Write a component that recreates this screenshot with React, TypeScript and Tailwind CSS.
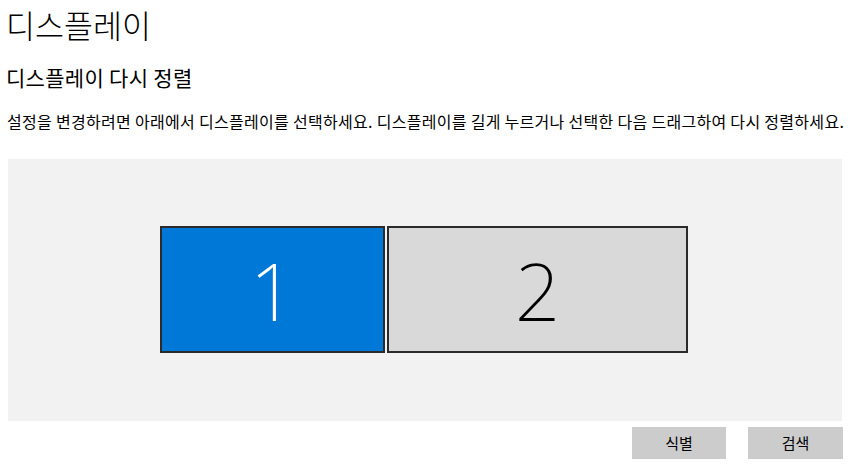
export default function App() {
    return (
        <div
            className="w-[864px] h-[471px] bg-white text-black overflow-hidden"
            style={{ fontFamily: '"Noto Sans CJK KR", "Noto Sans", sans-serif' }}
        >
            <div className="pl-[6px] pt-[4px]">
                {/* 페이지 제목 */}
                <h1 className="text-[31.5px] leading-[41px] font-light">디스플레이</h1>
                <h2 className="mt-[19px] text-[21px] leading-[27px] font-normal tracking-[0.3px]">디스플레이 다시 정렬</h2>
                <p className="mt-[19px] ml-[1px] text-[16px] leading-[23px] tracking-[0.3px] whitespace-nowrap">
                    설정을 변경하려면 아래에서 디스플레이를 선택하세요. 디스플레이를 길게 누르거나 선택한 다음 드래그하여 다시 정렬하세요.
                </p>
            </div>

            {/* 디스플레이 배치 영역 */}
            <div className="ml-[8px] mt-[26px] w-[834px] h-[262px] bg-[#f2f2f2] flex items-start pl-[152px] pt-[67px] gap-[2px]">
                <div className="w-[225px] h-[127px] bg-[#0078d7] border-2 border-[#2b2b2b] flex items-center justify-center">
                    <span
                        className="text-[80px] font-extralight text-white leading-none"
                        style={{ fontFamily: '"Noto Sans", sans-serif' }}
                    >
                        1
                    </span>
                </div>
                <div className="w-[301px] h-[127px] bg-[#d9d9d9] border-2 border-[#2b2b2b] flex items-center justify-center">
                    <span
                        className="text-[80px] font-extralight text-black leading-none"
                        style={{ fontFamily: '"Noto Sans", sans-serif' }}
                    >
                        2
                    </span>
                </div>
            </div>

            {/* 버튼 */}
            <div className="flex justify-end gap-[22px] pr-[21px] mt-[6px]">
                <button className="w-[94px] h-[32px] bg-[#cccccc] text-[15px]">식별</button>
                <button className="w-[95px] h-[32px] bg-[#cccccc] text-[15px]">검색</button>
            </div>
        </div>
    );
}
